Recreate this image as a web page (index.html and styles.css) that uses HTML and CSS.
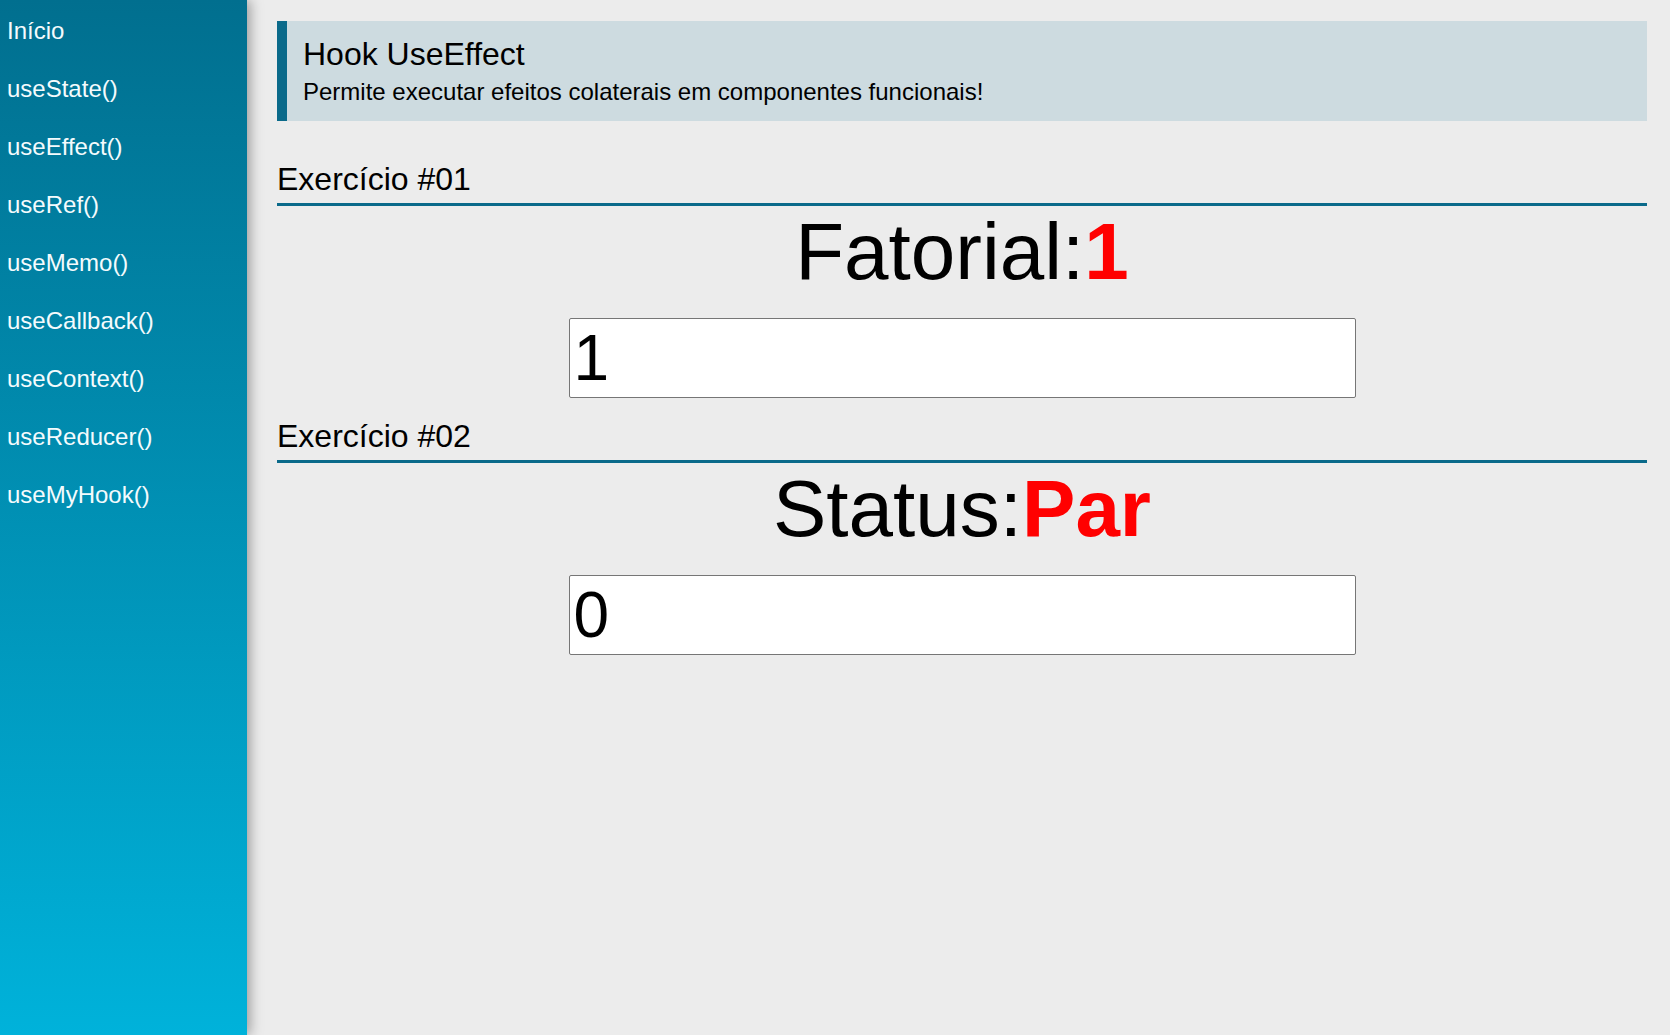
FILE: index.html
```html
<!DOCTYPE html>
<html lang="pt-BR">
<head>
<meta charset="utf-8">
<title>Hook UseEffect</title>
<link rel="stylesheet" href="styles.css">
</head>
<body>
<div class="app">
  <nav class="menu">
    <a class="menu-item" href="#">Início</a>
    <a class="menu-item" href="#">useState()</a>
    <a class="menu-item" href="#">useEffect()</a>
    <a class="menu-item" href="#">useRef()</a>
    <a class="menu-item" href="#">useMemo()</a>
    <a class="menu-item" href="#">useCallback()</a>
    <a class="menu-item" href="#">useContext()</a>
    <a class="menu-item" href="#">useReducer()</a>
    <a class="menu-item" href="#">useMyHook()</a>
  </nav>
  <main class="content">
    <header class="page-title">
      <h1 class="page-title-main">Hook UseEffect</h1>
      <p class="page-title-sub">Permite executar efeitos colaterais em componentes funcionais!</p>
    </header>
    <section class="exercise">
      <h2 class="section-title">Exercício #01</h2>
      <div class="result">Fatorial:<span class="red">1</span></div>
      <input class="input" type="number" value="1">
    </section>
    <section class="exercise">
      <h2 class="section-title">Exercício #02</h2>
      <div class="result">Status:<span class="red">Par</span></div>
      <input class="input" type="number" value="0">
    </section>
  </main>
</div>
</body>
</html>
```

FILE: styles.css
```css
* { box-sizing: border-box; }

html, body {
  margin: 0;
  padding: 0;
  height: 100%;
}

body {
  font-family: "Liberation Sans", Arial, sans-serif;
  background: #ececec;
  color: #000;
}

.app {
  display: flex;
  min-height: 100vh;
}

.menu {
  width: 247px;
  flex-shrink: 0;
  display: flex;
  flex-direction: column;
  padding-top: 2px;
  background: linear-gradient(to bottom, #016f8f, #00b2da);
  box-shadow: 3px 0 12px rgba(0, 0, 0, 0.35);
  position: relative;
  z-index: 1;
}

.menu-item {
  display: block;
  padding: 15px 7px;
  font-size: 24px;
  line-height: 28px;
  color: #f4fbfd;
  text-decoration: none;
}

.content {
  flex: 1;
  padding: 21px 23px 0 30px;
  display: flex;
  flex-direction: column;
}

.page-title {
  background: #cddbe0;
  border-left: 10px solid #0a6a8a;
  padding: 15px 16px 15px;
}

.page-title-main {
  margin: 0;
  font-size: 32px;
  line-height: 37px;
  font-weight: normal;
}

.page-title-sub {
  margin: 5px 0 0;
  font-size: 24px;
  line-height: 28px;
}

.exercise {
  display: flex;
  flex-direction: column;
  align-items: center;
  margin-top: 40px;
}

.exercise + .exercise {
  margin-top: 20px;
}

.section-title {
  align-self: stretch;
  margin: 0;
  font-size: 32px;
  line-height: 37px;
  font-weight: normal;
  padding-bottom: 5px;
  border-bottom: 3px solid #0a6a8a;
}

.result {
  font-size: 80px;
  line-height: 92px;
}

.red {
  color: #ff0000;
  font-weight: bold;
}

.input {
  margin-top: 20px;
  width: 787px;
  height: 80px;
  font-family: "Liberation Sans", Arial, sans-serif;
  font-size: 64px;
  padding: 1px 4px;
  border: 1px solid #767676;
  border-radius: 2px;
  background: #fff;
  color: #000;
  -moz-appearance: textfield;
  appearance: textfield;
}

.input::-webkit-outer-spin-button,
.input::-webkit-inner-spin-button {
  -webkit-appearance: none;
  margin: 0;
}
```
